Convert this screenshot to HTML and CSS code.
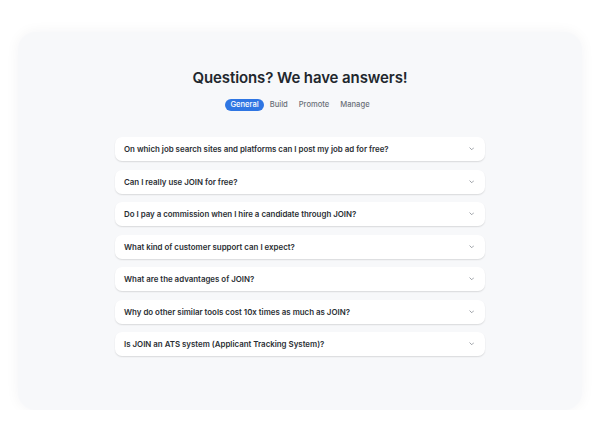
FILE: index.html
```html
<!DOCTYPE html>
<html>
<head>
<meta charset="utf-8">
<link rel="stylesheet" href="styles.css">
</head>
<body>
<section class="card">
  <h1 class="title">Questions? We have answers!</h1>
  <nav class="tabs">
    <span class="tab active">General</span>
    <span class="tab">Build</span>
    <span class="tab">Promote</span>
    <span class="tab">Manage</span>
  </nav>
  <ul class="faq">
    <li class="item"><span>On which job search sites and platforms can I post my job ad for free?</span><svg class="chev" viewBox="0 0 10 6"><path d="M1 1l4 4 4-4"/></svg></li>
    <li class="item"><span>Can I really use JOIN for free?</span><svg class="chev" viewBox="0 0 10 6"><path d="M1 1l4 4 4-4"/></svg></li>
    <li class="item"><span>Do I pay a commission when I hire a candidate through JOIN?</span><svg class="chev" viewBox="0 0 10 6"><path d="M1 1l4 4 4-4"/></svg></li>
    <li class="item"><span>What kind of customer support can I expect?</span><svg class="chev" viewBox="0 0 10 6"><path d="M1 1l4 4 4-4"/></svg></li>
    <li class="item"><span>What are the advantages of JOIN?</span><svg class="chev" viewBox="0 0 10 6"><path d="M1 1l4 4 4-4"/></svg></li>
    <li class="item"><span>Why do other similar tools cost 10x times as much as JOIN?</span><svg class="chev" viewBox="0 0 10 6"><path d="M1 1l4 4 4-4"/></svg></li>
    <li class="item"><span>Is JOIN an ATS system (Applicant Tracking System)?</span><svg class="chev" viewBox="0 0 10 6"><path d="M1 1l4 4 4-4"/></svg></li>
  </ul>
</section>
</body>
</html>
```
FILE: styles.css
```css
html, body {
  margin: 0;
  padding: 0;
  background: #ffffff;
  font-family: Inter, "Noto Sans", sans-serif;
}
.card {
  margin: 32px 18px 0;
  height: 378px;
  box-sizing: border-box;
  padding-top: 36px;
  background: #f7f8fa;
  border-radius: 18px;
  box-shadow: 0 0 14px rgba(30, 40, 60, 0.05);
  display: flex;
  flex-direction: column;
  align-items: center;
}
.title {
  margin: 0;
  font-size: 15px;
  line-height: 19px;
  font-weight: 600;
  color: #22272d;
  letter-spacing: -0.1px;
}
.tabs {
  margin-top: 12px;
  display: flex;
  gap: 1px;
}
.tab {
  font-size: 7.6px;
  line-height: 12px;
  height: 12px;
  padding: 0 5px;
  border-radius: 6px;
  color: #6b7078;
  font-weight: 500;
}
.tab.active {
  background: #2f76e3;
  color: #ffffff;
}
.faq {
  list-style: none;
  margin: 26px 0 0;
  padding: 0;
  width: 370px;
  display: flex;
  flex-direction: column;
  gap: 8.5px;
}
.item {
  height: 24px;
  box-sizing: border-box;
  padding: 0 11px 0 9px;
  background: #ffffff;
  border-radius: 7px;
  box-shadow: 0 1px 1.5px rgba(0, 0, 0, 0.12);
  display: flex;
  align-items: center;
  justify-content: space-between;
  font-size: 7.9px;
  font-weight: 600;
  color: #2a2e33;
}
.chev {
  width: 5.5px;
  height: 3.3px;
  fill: none;
  stroke: #8a8f96;
  stroke-width: 1.5;
}
```
